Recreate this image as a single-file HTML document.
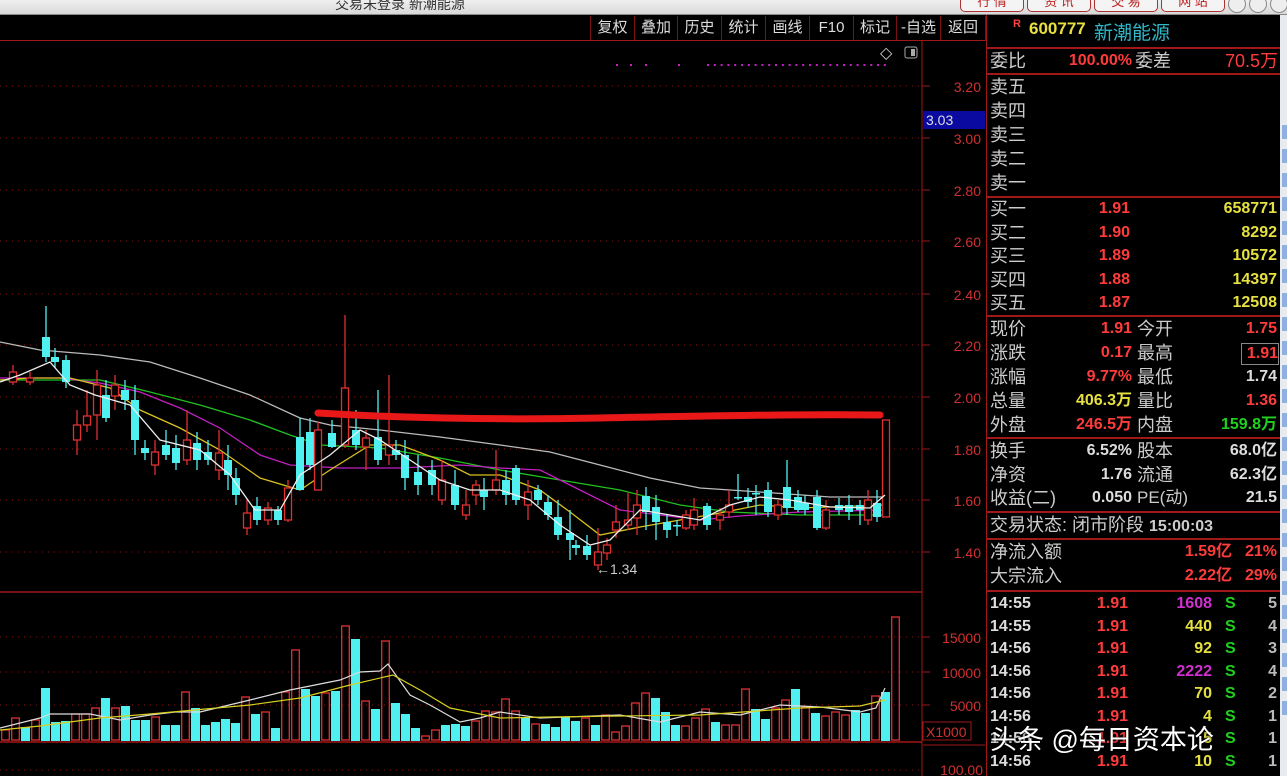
<!DOCTYPE html>
<html><head><meta charset="utf-8"><style>
body{margin:0;width:1287px;height:776px;background:#000;overflow:hidden;position:relative;font-family:"Liberation Sans","Noto Sans CJK SC",sans-serif}
.a{position:absolute;white-space:nowrap}
.tb{position:absolute;top:16px;height:24px;color:#ddd;font-size:15px;line-height:24px;text-align:center;border-right:1px solid #7a1010}
.lab{position:absolute;left:990px;color:#ccc;font-size:18px;line-height:24px}
.v{position:absolute;font-weight:bold;font-size:16px;line-height:24px;text-align:right}
.r{color:#ff3b3b}.y{color:#e6e040}.w{color:#ddd}.g{color:#20d020}.m{color:#d030d0}
.hl{position:absolute;left:987px;width:293px;height:2px;background:#a01818}
</style></head><body>
<!-- title bar -->
<div class="a" style="left:0;top:0;width:1287px;height:14px;background:linear-gradient(#f0f0f0,#d8d8d8);border-bottom:1px solid #888"></div>
<div class="a" style="left:335px;top:-6px;font-size:14px;color:#333">交易未登录 新潮能源</div>
<div class="a" style="left:960px;top:-4px;width:62px;height:14px;border:1px solid #a33;border-radius:5px;background:#f4f4f4;color:#b22;font-size:13px;line-height:10px;text-align:center">行 情</div>
<div class="a" style="left:1027px;top:-4px;width:62px;height:14px;border:1px solid #a33;border-radius:5px;background:#f4f4f4;color:#b22;font-size:13px;line-height:10px;text-align:center">资 讯</div>
<div class="a" style="left:1094px;top:-4px;width:62px;height:14px;border:1px solid #a33;border-radius:5px;background:#f4f4f4;color:#b22;font-size:13px;line-height:10px;text-align:center">交 易</div>
<div class="a" style="left:1161px;top:-4px;width:62px;height:14px;border:1px solid #a33;border-radius:5px;background:#f4f4f4;color:#b22;font-size:13px;line-height:10px;text-align:center">网 站</div>
<div class="a" style="left:1228px;top:-5px;width:16px;height:16px;border:1px solid #888;border-radius:50%;background:#eee"></div>
<div class="a" style="left:1249px;top:-5px;width:16px;height:16px;border:1px solid #888;border-radius:50%;background:#eee"></div>
<div class="a" style="left:1270px;top:-5px;width:16px;height:16px;border:1px solid #888;border-radius:50%;background:#eee"></div>
<!-- right scroll strip -->
<div class="a" style="left:1280px;top:15px;width:7px;height:761px;background:#e8ecf0"></div>
<div class="a" style="left:1282px;top:125px;width:5px;height:600px;background:repeating-linear-gradient(#8fb0e0 0 14px,#e8ecf0 14px 24px)"></div>
<!-- toolbar -->
<div class="a" style="left:0;top:40px;width:987px;height:1px;background:#a01818"></div>
<div class="tb" style="left:590px;width:0;border-right:1px solid #7a1010"></div>
<div class="tb" style="left:591px;width:43px">复权</div>
<div class="tb" style="left:635px;width:42px">叠加</div>
<div class="tb" style="left:678px;width:43px">历史</div>
<div class="tb" style="left:722px;width:43px">统计</div>
<div class="tb" style="left:766px;width:43px">画线</div>
<div class="tb" style="left:810px;width:43px">F10</div>
<div class="tb" style="left:854px;width:42px">标记</div>
<div class="tb" style="left:897px;width:43px">-自选</div>
<div class="tb" style="left:941px;width:44px">返回</div>
<div class="a" style="left:986px;top:15px;width:1px;height:761px;background:#a01818"></div>
<!-- chart svg -->
<svg class="a" style="left:0;top:0" width="987" height="776" id="ch">
<line x1="922" y1="41" x2="922" y2="776" stroke="#a01818"/>
<line x1="0" y1="592" x2="922" y2="592" stroke="#a01818" stroke-width="1.5"/>
<line x1="0" y1="742" x2="922" y2="742" stroke="#a01818" stroke-width="1.5"/>
<text x="880" y="58" fill="#ccc" font-size="16" font-family="DejaVu Sans">◇</text>
<rect x="905" y="47" width="12" height="11" rx="2" fill="none" stroke="#aaa"/><rect x="911" y="49" width="4" height="7" fill="#aaa"/>
<rect x="923" y="111" width="62" height="18" fill="#0a0aa0"/>
<text x="926" y="125" fill="#ddd" font-size="14">3.03</text>
<rect x="923" y="722" width="48" height="18" fill="none" stroke="#a01818"/>
<text x="926" y="737" fill="#d03030" font-size="14">X1000</text>
<line x1="923" y1="745" x2="985" y2="745" stroke="#a01818"/>
<text x="983" y="775" fill="#d03030" font-size="14" text-anchor="end">100.00</text>
<g id="dyn"></g>
</svg>
<!-- right panel -->
<div class="a" style="left:1013px;top:18px;color:#ff4040;font-size:11px;font-weight:bold">R</div>
<div class="a" style="left:1029px;top:19px;color:#e8e040;font-size:17px;font-weight:bold">600777</div>
<div class="a" style="left:1094px;top:18px;color:#30b8c8;font-size:19px">新潮能源</div>
<div class="hl" style="top:47px"></div>
<div class="lab" style="top:49px">委比</div><div class="v r" style="left:1040px;width:92px;top:49px">100.00%</div><div class="lab" style="left:1135px;top:49px">委差</div><div class="v r" style="left:1180px;width:98px;top:49px;font-weight:normal;font-size:18px">70.5万</div>
<div class="hl" style="top:73px"></div>
<div class="lab" style="top:75px">卖五</div><div class="lab" style="top:99px">卖四</div><div class="lab" style="top:123px">卖三</div><div class="lab" style="top:147px">卖二</div><div class="lab" style="top:171px">卖一</div>
<div class="hl" style="top:196px"></div>
<div class="lab" style="top:197px">买一</div><div class="v r" style="left:1070px;width:60px;top:197px">1.91</div><div class="v y" style="left:1180px;width:97px;top:197px">658771</div>
<div class="lab" style="top:221px">买二</div><div class="v r" style="left:1070px;width:60px;top:221px">1.90</div><div class="v y" style="left:1180px;width:97px;top:221px">8292</div>
<div class="lab" style="top:244px">买三</div><div class="v r" style="left:1070px;width:60px;top:244px">1.89</div><div class="v y" style="left:1180px;width:97px;top:244px">10572</div>
<div class="lab" style="top:268px">买四</div><div class="v r" style="left:1070px;width:60px;top:268px">1.88</div><div class="v y" style="left:1180px;width:97px;top:268px">14397</div>
<div class="lab" style="top:291px">买五</div><div class="v r" style="left:1070px;width:60px;top:291px">1.87</div><div class="v y" style="left:1180px;width:97px;top:291px">12508</div>
<div class="hl" style="top:315px"></div>
<div class="lab" style="top:317px">现价</div><div class="v r" style="left:1060px;width:72px;top:317px">1.91</div><div class="lab" style="left:1137px;top:317px">今开</div><div class="v r" style="left:1200px;width:77px;top:317px">1.75</div>
<div class="lab" style="top:341px">涨跌</div><div class="v r" style="left:1060px;width:72px;top:341px">0.17</div><div class="lab" style="left:1137px;top:341px">最高</div><div class="v r" style="left:1241px;width:36px;top:343px;line-height:20px;border:1px solid #888">1.91</div>
<div class="lab" style="top:365px">涨幅</div><div class="v r" style="left:1060px;width:72px;top:365px">9.77%</div><div class="lab" style="left:1137px;top:365px">最低</div><div class="v w" style="left:1200px;width:77px;top:365px">1.74</div>
<div class="lab" style="top:389px">总量</div><div class="v y" style="left:1040px;width:92px;top:389px">406.3万</div><div class="lab" style="left:1137px;top:389px">量比</div><div class="v r" style="left:1200px;width:77px;top:389px">1.36</div>
<div class="lab" style="top:413px">外盘</div><div class="v r" style="left:1040px;width:92px;top:413px">246.5万</div><div class="lab" style="left:1137px;top:413px">内盘</div><div class="v g" style="left:1180px;width:97px;top:413px">159.8万</div>
<div class="hl" style="top:437px"></div>
<div class="lab" style="top:439px">换手</div><div class="v w" style="left:1040px;width:92px;top:439px">6.52%</div><div class="lab" style="left:1137px;top:439px">股本</div><div class="v w" style="left:1180px;width:97px;top:439px">68.0亿</div>
<div class="lab" style="top:463px">净资</div><div class="v w" style="left:1040px;width:92px;top:463px">1.76</div><div class="lab" style="left:1137px;top:463px">流通</div><div class="v w" style="left:1180px;width:97px;top:463px">62.3亿</div>
<div class="lab" style="top:486px">收益(二)</div><div class="v w" style="left:1040px;width:92px;top:486px">0.050</div><div class="lab" style="left:1137px;top:486px;font-size:17px">PE(动)</div><div class="v w" style="left:1200px;width:77px;top:486px">21.5</div>
<div class="hl" style="top:511px"></div>
<div class="lab" style="top:513px">交易状态: 闭市阶段 <b style="font-size:16px">15:00:03</b></div>
<div class="hl" style="top:538px"></div>
<div class="lab" style="top:540px">净流入额</div><div class="v r" style="left:1150px;width:82px;top:540px">1.59亿</div><div class="v r" style="left:1235px;width:42px;top:540px">21%</div>
<div class="lab" style="top:564px">大宗流入</div><div class="v r" style="left:1150px;width:82px;top:564px">2.22亿</div><div class="v r" style="left:1235px;width:42px;top:564px">29%</div>
<div class="hl" style="top:590px"></div>
<div id="ticks"></div>
<div class="a" style="left:990px;top:718px;color:#fff;font-size:27px;text-shadow:0 0 3px #000">头条 @每日资本论</div>
<script>
var s='',py=function(p){return 552-(p-1.4)*259};
[[3.2,86],[3.0,138],[2.8,190],[2.6,241],[2.4,294],[2.2,345],[2.0,397],[1.8,449],[1.6,500],[1.4,552]].forEach(function(a){
 s+='<line x1="0" y1="'+a[1]+'" x2="920" y2="'+a[1]+'" stroke="#8a1515" stroke-dasharray="1,5"/>';
 s+='<line x1="922" y1="'+a[1]+'" x2="930" y2="'+a[1]+'" stroke="#a01818"/>';
 s+='<text x="981" y="'+(a[1]+6)+'" fill="#d03030" font-size="14" text-anchor="end">'+a[0].toFixed(2)+'</text>';});
[[15000,637],[10000,672],[5000,705]].forEach(function(a){
 s+='<line x1="0" y1="'+a[1]+'" x2="920" y2="'+a[1]+'" stroke="#8a1515" stroke-dasharray="1,5"/>';
 s+='<line x1="922" y1="'+a[1]+'" x2="930" y2="'+a[1]+'" stroke="#a01818"/>';
 s+='<text x="981" y="'+(a[1]+6)+'" fill="#d03030" font-size="14" text-anchor="end">'+a[0]+'</text>';});
s+='<line x1="0" y1="770" x2="920" y2="770" stroke="#8a1515" stroke-dasharray="1,5"/>';
// purple dots
[616,630,645,678].concat(Array.from({length:27},function(_,i){return 707+i*6.8})).forEach(function(x){s+='<rect x="'+x+'" y="64" width="2" height="2" fill="#c020c0"/>'});
function pl(pts,c,w){s+='<polyline fill="none" stroke="'+c+'" stroke-width="'+(w||1.3)+'" points="'+pts.map(function(p){return p.join(',')}).join(' ')+'"/>';}
pl([[0,342],[40,350],[100,355],[150,362],[200,378],[250,395],[300,418],[330,425],[380,430],[440,437],[500,445],[550,452],[600,465],[650,478],[700,488],[760,492],[830,497],[885,497]],'#bbb');
pl([[0,380],[100,380],[150,392],[200,405],[250,420],[290,435],[320,445],[380,448],[440,458],[500,470],[560,480],[620,490],[680,505],[730,512],[800,515],[885,515]],'#20c020');
pl([[0,378],[60,378],[100,383],[140,392],[180,408],[220,428],[260,455],[290,465],[340,468],[400,468],[460,465],[500,468],[540,470],[580,490],[620,510],[660,515],[700,520],[740,516],[800,512],[885,510]],'#c020c0');
pl([[0,380],[30,378],[70,378],[110,388],[140,410],[180,428],[220,450],[260,478],[300,490],[330,470],[370,445],[400,445],[440,460],[470,475],[500,475],[540,490],[570,512],[600,535],[640,527],[680,520],[720,513],[760,505],[800,508],[885,505]],'#d8c020');
var C=[[13,372,382,365,385,1],[30,378,382,372,385,1],[46,337,357,306,362,0],[55,357,362,348,368,0],[66,360,382,355,388,0],[77,425,440,410,455,1],[87,416,425,390,432,1],[97,385,415,370,440,1],[106,395,418,380,422,0],[115,385,396,375,410,1],[125,390,400,380,410,0],[135,400,440,385,455,0],[145,448,453,440,460,0],[155,452,465,440,475,1],[166,445,455,430,460,0],[176,448,463,435,470,0],[187,440,460,410,465,1],[197,443,460,432,470,0],[208,452,460,440,465,0],[219,453,470,430,480,1],[228,460,475,445,490,0],[236,478,495,468,505,0],[247,513,528,500,535,1],[257,506,520,497,525,0],[268,508,520,502,525,1],[278,510,520,506,525,0],[288,488,520,480,522,1],[300,437,490,418,490,0],[310,432,465,418,470,0],[318,430,490,422,485,1],[332,433,447,420,448,0],[345,388,445,315,448,1],[356,430,445,410,450,0],[366,438,447,430,470,1],[378,437,460,390,465,0],[389,445,455,375,465,1],[396,450,455,440,460,0],[405,455,478,440,490,0],[418,472,485,455,495,0],[432,470,485,460,495,0],[442,480,500,460,505,1],[455,485,505,470,510,0],[466,505,515,490,520,1],[476,485,495,480,505,1],[484,490,497,478,510,0],[496,480,490,450,495,1],[506,480,495,470,505,0],[516,468,500,465,505,0],[528,492,505,480,520,1],[538,490,500,485,505,0],[548,502,515,495,520,0],[558,517,535,500,540,0],[570,533,540,510,560,0],[576,545,548,540,555,0],[587,546,555,535,560,0],[598,552,565,528,570,1],[607,545,553,538,560,1],[616,522,530,505,538,1],[628,520,525,493,530,1],[637,505,518,490,535,1],[646,496,512,487,530,0],[656,507,522,495,540,0],[667,522,530,515,538,0],[677,525,526,520,536,0],[686,515,528,510,530,1],[694,510,525,498,530,1],[707,506,525,503,530,0],[720,515,520,508,530,1],[729,505,512,490,518,1],[738,497,498,474,500,0],[748,497,502,488,508,0],[756,493,494,485,515,0],[768,490,512,482,517,0],[778,505,515,500,520,1],[787,487,508,460,515,0],[798,497,510,490,512,0],[805,503,510,495,515,0],[817,497,528,490,530,0],[826,510,528,500,530,1],[839,505,510,498,515,0],[849,505,512,495,520,0],[860,505,510,500,525,0],[868,500,520,490,525,1],[877,503,517,490,522,0],[886,420,517,420,517,1]];
C.forEach(function(c){var col=c[5]?'#e03030':'#50f0f0';
 s+='<line x1="'+c[0]+'" y1="'+c[3]+'" x2="'+c[0]+'" y2="'+c[4]+'" stroke="'+col+'" stroke-width="1.3"/>';
 var h=Math.max(c[2]-c[1],1.5);
 if(c[5])s+='<rect x="'+(c[0]-3.5)+'" y="'+c[1]+'" width="7" height="'+h+'" fill="#000" stroke="'+col+'" stroke-width="1.3"/>';
 else s+='<rect x="'+(c[0]-4)+'" y="'+c[1]+'" width="8" height="'+h+'" fill="'+col+'"/>';});
pl([[0,382],[20,375],[50,362],[70,385],[95,395],[130,405],[160,440],[200,450],[230,475],[255,510],[280,510],[300,475],[330,455],[360,430],[380,440],[410,460],[440,480],[470,490],[500,490],[530,500],[560,525],[590,545],[610,540],[640,510],[670,515],[700,520],[730,505],[760,497],[790,500],[830,507],[870,508],[885,495]],'#eee');
// red marker line
s+='<path d="M318,413 C400,418 500,420 600,418 S800,414 880,415" stroke="#e81818" stroke-width="7" fill="none" stroke-linecap="round"/>';
s+='<text x="596" y="574" fill="#ccc" font-size="14">←1.34</text>';
// volume
var V='1730 1718 0727 1720 0688 0722 0721 1714 1714 1708 0698 1708 0706 0720 0720 1717 0725 0725 1692 0708 0725 0722 0719 0723 1697 0714 1712 0728 1692 1650 0689 0696 1693 0691 1626 0639 1701 0709 1641 0703 0714 0728 1736 1730 0725 0724 0726 1721 1711 1712 1699 1711 0718 1724 0724 0727 0717 0721 1718 0725 1715 1732 1726 1703 1693 0698 0712 0725 1726 1718 1709 0722 1725 1725 1689 0709 0719 1708 1700 0689 1707 0713 1716 1712 1715 0710 0713 1696 0692 1617'.split(' ');
V.forEach(function(v,i){var x=i*10+1,t=+v.slice(1),r=v[0]=='1';
 if(r)s+='<rect x="'+(x+0.7)+'" y="'+t+'" width="7.6" height="'+(740-t)+'" fill="none" stroke="#e03030" stroke-width="1.3"/>';
 else s+='<rect x="'+x+'" y="'+t+'" width="9" height="'+(741-t)+'" fill="#50f0f0"/>';});
pl([[0,728],[40,718],[50,714],[90,714],[120,720],[150,715],[175,712],[200,712],[250,700],[290,690],[340,680],[360,672],[380,671],[388,664],[410,695],[430,705],[460,722],[480,718],[500,712],[540,718],[620,715],[660,722],[700,712],[740,715],[780,705],[820,707],[860,712],[876,708],[885,688]],'#ddd',1.2);
pl([[0,730],[40,726],[100,718],[150,714],[250,705],[300,698],[350,685],[393,675],[420,690],[450,708],[500,718],[550,717],[620,716],[700,715],[800,708],[860,706],[885,700]],'#d8d020',1.2);
document.getElementById('dyn').innerHTML=s;
var T=[['14:55','1608','m','5'],['14:55','440','y','4'],['14:56','92','y','3'],['14:56','2222','m','4'],['14:56','70','y','2'],['14:56','4','y','1'],['14:56','5','y','1'],['14:56','10','y','1']],h='';
T.forEach(function(t,i){var y=592+i*22.5;
h+='<div class="v w" style="left:990px;top:'+y+'px;text-align:left">'+t[0]+'</div><div class="v r" style="left:1085px;width:43px;top:'+y+'px">1.91</div><div class="v '+t[2]+'" style="left:1150px;width:62px;top:'+y+'px">'+t[1]+'</div><div class="v g" style="left:1225px;top:'+y+'px">S</div><div class="v w" style="left:1260px;width:17px;top:'+y+'px;color:#bbb">'+t[3]+'</div>';});
document.getElementById('ticks').innerHTML=h;
</script>
</body></html>
